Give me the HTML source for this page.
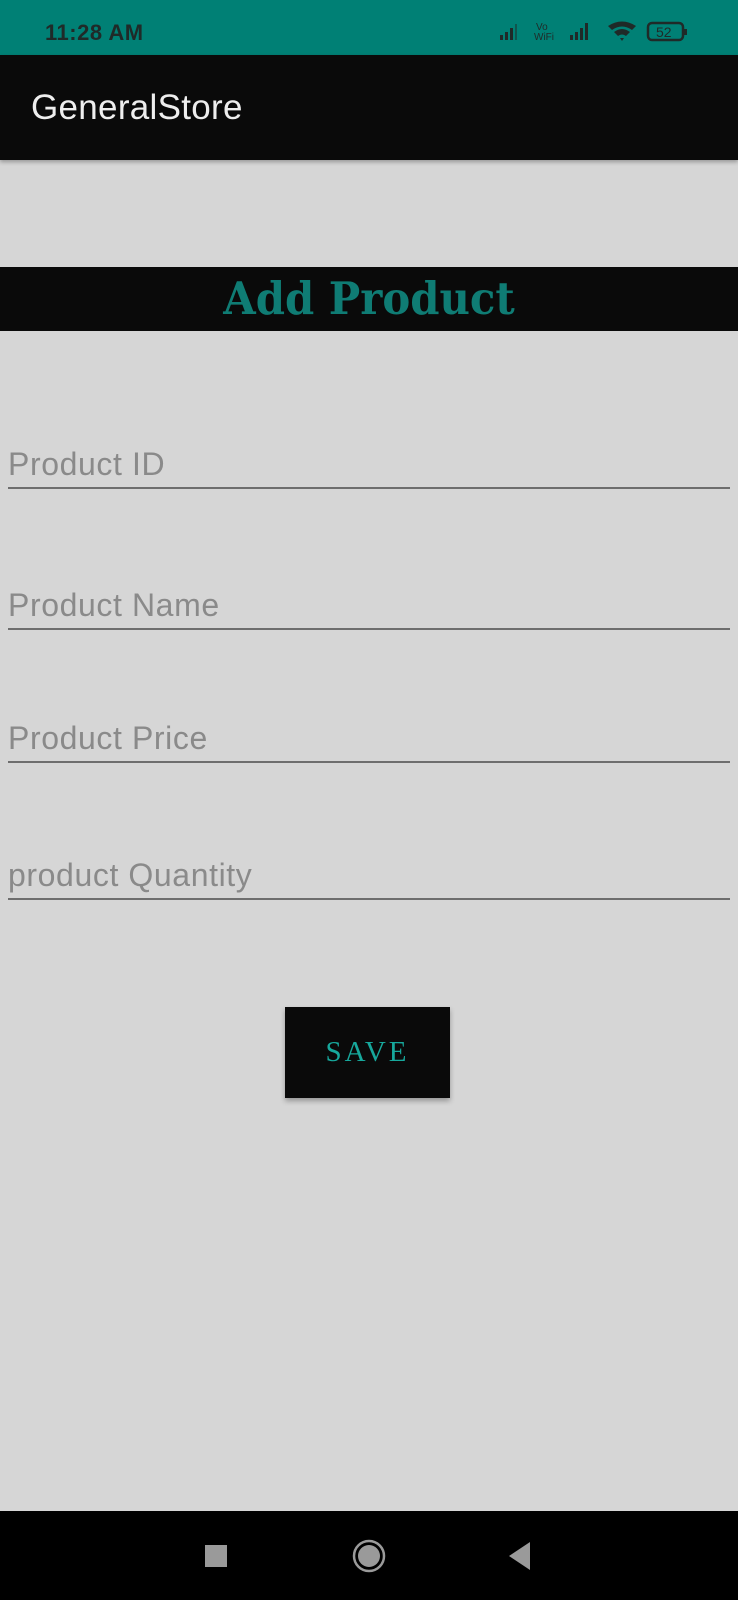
<!DOCTYPE html>
<html><head><meta charset="utf-8"><style>
*{margin:0;padding:0;box-sizing:border-box}
body{width:738px;height:1600px;background:#d6d6d6;position:relative;overflow:hidden;font-family:"Liberation Sans",sans-serif}
.abs{position:absolute}
.status{left:0;top:0;width:738px;height:55px;background:#008075}
.time{left:45px;top:20px;font-size:22px;font-weight:bold;color:#1f2a28;letter-spacing:0.5px}
.appbar{left:0;top:55px;width:738px;height:105px;background:#0a0a0a;box-shadow:0 2px 4px rgba(0,0,0,.3)}
.title{left:31px;top:88px;font-size:35px;color:#eee;letter-spacing:0.3px}
.band{left:0;top:267px;width:738px;height:64px;background:#0a0a0a}
.band div{width:100%;text-align:center;font-family:"DejaVu Serif","Liberation Serif",serif;font-weight:bold;font-size:45px;color:#0f7c74;line-height:64px;transform:scaleX(0.93)}
.f{left:8px;width:722px;border-bottom:2px solid #6e6e6e;font-size:32px;color:#8a8a8a;height:43px;line-height:36px;letter-spacing:0.6px}
.btn{left:285px;top:1007px;width:165px;height:91px;background:#0a0a0a;box-shadow:0 3px 5px rgba(0,0,0,.3);color:#17a89c;font-family:"Liberation Serif",serif;font-size:29px;text-align:center;line-height:91px;letter-spacing:3px}
.nav{left:0;top:1511px;width:738px;height:89px;background:#000}
</style></head><body>
<div class="abs status"></div>
<div class="abs time">11:28 AM</div>
<svg class="abs" style="left:498px;top:20px" width="200" height="28">
<g fill="#1f2a28">
<rect x="2" y="15" width="3" height="5"/><rect x="7" y="12" width="3" height="8"/><rect x="12" y="8" width="3" height="12"/><rect x="17" y="4" width="2" height="16" opacity=".5"/>
<text x="38" y="10" font-size="10" font-family="Liberation Sans">Vo</text><text x="36" y="20" font-size="10" font-family="Liberation Sans">WiFi</text>
<rect x="72" y="15" width="3" height="5"/><rect x="77" y="12" width="3" height="8"/><rect x="82" y="8" width="3" height="12"/><rect x="87" y="3" width="3" height="17"/>
<path d="M110 6 Q124 -3 138 6 L134 10 Q124 3 114 10Z M116 12 Q124 6 132 12 L128 16 Q124 13 120 16Z M122 18 L124 21 L126 18Z"/>
<rect x="150" y="3" width="35" height="17" rx="4" fill="none" stroke="#1f2a28" stroke-width="2.5"/>
<rect x="186" y="9" width="3" height="6"/>
<text x="158" y="17" font-size="14" font-family="Liberation Sans">52</text>
</g></svg>
<div class="abs appbar"></div>
<div class="abs title">GeneralStore</div>
<div class="abs band"><div>Add Product</div></div>
<div class="abs f" style="top:446px">Product ID</div>
<div class="abs f" style="top:587px">Product Name</div>
<div class="abs f" style="top:720px">Product Price</div>
<div class="abs f" style="top:857px">product Quantity</div>
<div class="abs btn">SAVE</div>
<div class="abs nav"></div>
<svg class="abs" style="left:0;top:1511px" width="738" height="89">
<rect x="205" y="34" width="22" height="22" fill="#9a9a9a"/>
<circle cx="369" cy="45" r="15" fill="none" stroke="#9a9a9a" stroke-width="2.5"/>
<circle cx="369" cy="45" r="11" fill="#9a9a9a"/>
<path d="M509 45 L530 31 L530 59Z" fill="#9a9a9a"/>
</svg>
</body></html>
